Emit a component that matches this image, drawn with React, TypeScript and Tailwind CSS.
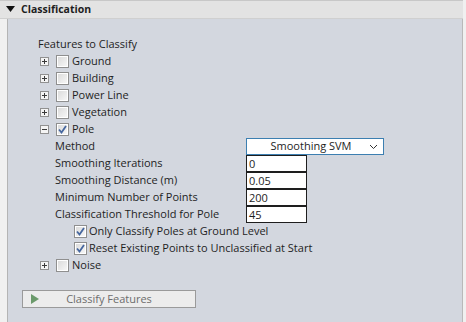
import React from 'react';

const font = { fontFamily: '"Open Sans", "Noto Sans", "Liberation Sans", sans-serif' };

const Expander = ({ open }: { open?: boolean }) => (
  <div className="w-[9px] h-[9px] border border-[#919191] bg-[#f4f4f4] relative shrink-0">
    <div className="absolute left-[1px] top-[3px] w-[5px] h-[1px] bg-[#3a3a3a]" />
    {!open && <div className="absolute left-[3px] top-[1px] w-[1px] h-[5px] bg-[#3a3a3a]" />}
  </div>
);

const Checkbox = ({ checked }: { checked?: boolean }) => (
  <div className="w-[13px] h-[13px] border border-[#8f8f8f] bg-white p-[1px] shrink-0">
    <div className="w-full h-full bg-gradient-to-br from-[#dcdcdc] to-[#f6f6f6] flex items-center justify-center">
      {checked && (
        <svg width="9" height="9" viewBox="0 0 9 9">
          <path d="M1 4.5 L3.5 7.5 L8 1" stroke="#46679f" strokeWidth="1.8" fill="none" />
        </svg>
      )}
    </div>
  </div>
);

const Feature = ({ label, open, checked }: { label: string; open?: boolean; checked?: boolean }) => (
  <div className="h-[17px] flex items-center">
    <div className="w-[17px] flex"><Expander open={open} /></div>
    <div className="ml-[-1px]"><Checkbox checked={checked} /></div>
    <span className="ml-[3px]">{label}</span>
  </div>
);

const Field = ({ label, children }: { label: string; children: React.ReactNode }) => (
  <div className="h-[17px] flex items-center">
    <span className="w-[191px] shrink-0">{label}</span>
    {children}
  </div>
);

const Input = ({ value }: { value: string }) => (
  <div className="w-[61px] h-[17px] border border-[#1e1e1e] bg-white px-[2px] leading-[15px]">{value}</div>
);

export default function App() {
  return (
    <div className="w-[466px] h-[322px] bg-[#f0f0f0] text-[11px] text-[#1e1e1e] flex flex-col" style={font}>
      {/* header */}
      <div className="h-[19px] bg-[#e3e3e3] border-t border-[#c8c8c8] border-b border-b-[#d0d0d0] flex items-center pl-[6px] mr-[3px]">
        <svg width="9" height="7" viewBox="0 0 9 7" className="mr-[6px]">
          <path d="M0 0 L9 0 L4.5 6 Z" fill="#111" />
        </svg>
        <span className="font-bold text-[10.5px]">Classification</span>
      </div>
      <div className="flex-1 flex ml-[7px] mr-[3px]">
        <div className="flex-1 bg-[#d3d7df] border-l border-[#b4b4b4] border-r border-r-[#b9b9b9] pl-[30px] pt-[16px]">
          <div className="h-[18px] flex items-center">Features to Classify</div>
          <div className="pl-[2px]">
            <Feature label="Ground" />
            <Feature label="Building" />
            <Feature label="Power Line" />
            <Feature label="Vegetation" />
            <Feature label="Pole" open checked />
          </div>
          <div className="pl-[17px]">
            <Field label="Method">
              <div className="w-[138px] h-[17px] border border-[#3c7fb1] bg-white flex items-center relative">
                <span className="flex-1 text-center pr-[8px]">Smoothing SVM</span>
                <svg width="9" height="6" viewBox="0 0 9 6" className="absolute right-[5px]">
                  <path d="M1 1 L4.5 4.5 L8 1" stroke="#333" strokeWidth="1" fill="none" />
                </svg>
              </div>
            </Field>
            <Field label="Smoothing Iterations"><Input value="0" /></Field>
            <Field label="Smoothing Distance (m)"><Input value="0.05" /></Field>
            <Field label="Minimum Number of Points"><Input value="200" /></Field>
            <Field label="Classification Threshold for Pole"><Input value="45" /></Field>
            <div className="pl-[19px]">
              <div className="h-[17px] flex items-center">
                <Checkbox checked />
                <span className="ml-[2px]">Only Classify Poles at Ground Level</span>
              </div>
              <div className="h-[17px] flex items-center">
                <Checkbox checked />
                <span className="ml-[2px]">Reset Existing Points to Unclassified at Start</span>
              </div>
            </div>
          </div>
          <div className="pl-[2px]">
            <Feature label="Noise" />
          </div>
          <div className="mt-[16px] ml-[-16px] w-[174px] h-[18px] border border-[#9a9a9a] bg-[#ececec] flex items-center relative">
            <svg width="8" height="10" viewBox="0 0 8 10" className="absolute left-[8px]">
              <path d="M0 0 L8 5 L0 10 Z" fill="#6b9a6b" />
            </svg>
            <span className="flex-1 text-center text-[#6d6d6d]">Classify Features</span>
          </div>
        </div>
      </div>
    </div>
  );
}
